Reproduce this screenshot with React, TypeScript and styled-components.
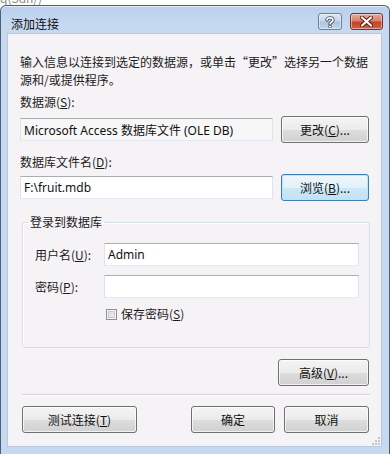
import React from "react";
import styled, { createGlobalStyle } from "styled-components";

const GlobalStyle = createGlobalStyle`
  html, body { margin: 0; padding: 0; background: #ffffff; }
  body {
    width: 390px; height: 454px; overflow: hidden;
    font-family: "Noto Sans CJK SC", "Noto Sans", sans-serif;
    font-size: 12px; color: #1b1b1b;
  }
  #root { width: 390px; height: 454px; }
`;

const Page = styled.div`
  width: 390px;
  height: 454px;
  display: flex;
  flex-direction: column;
  overflow: hidden;
`;

const TopStrip = styled.div`
  height: 5px;
  overflow: hidden;
  background: #fff;
  color: #8a8a8a;
  font-size: 12px;
  line-height: 14px;
  span { display: block; margin-top: -9px; padding-left: 0; }
`;

const Window = styled.div`
  flex: 1;
  display: flex;
  flex-direction: column;
  border: 1px solid #4d5d72;
  border-bottom: none;
  border-radius: 6px 6px 0 0;
  background: linear-gradient(#b9cfec 0px, #c6d9f1 20px, #c6d9f1 100%);
  box-shadow: inset 0 1px 0 rgba(255,255,255,0.6);
`;

const TitleBar = styled.div`
  height: 27px;
  display: flex;
  align-items: flex-start;
  padding: 0 6px 0 10px;
`;

const Title = styled.div`
  font-size: 12px;
  line-height: 14px;
  margin-top: 11px;
  color: #111;
`;

const Controls = styled.div`
  margin-left: auto;
  margin-top: 7px;
  display: flex;
  gap: 8px;
`;

const CaptionButton = styled.div<{ $close?: boolean }>`
  width: ${(p) => (p.$close ? 33 : 24)}px;
  height: 17px;
  box-sizing: border-box;
  border: 1px solid ${(p) => (p.$close ? "#7a2e24" : "#6d7f98")};
  border-radius: 3px;
  display: flex;
  align-items: center;
  justify-content: center;
  background: ${(p) =>
    p.$close
      ? "linear-gradient(#e9a99a 0%, #d9816d 45%, #c2422b 55%, #d6603f 100%)"
      : "linear-gradient(#dce7f5 0%, #c8d7ec 45%, #aec3df 55%, #c3d6ee 100%)"};
  box-shadow: inset 0 0 0 1px rgba(255,255,255,0.45);
`;

const Body = styled.div`
  flex: 1;
  display: flex;
  padding: 0 7px 7px 6px;
`;

const Content = styled.div`
  position: relative;
  flex: 1;
  min-width: 0;
  background: #f5f3f5;
  border: 1px solid #b8c8dc;
  padding: 19px 12px 0 12px;
  display: flex;
  flex-direction: column;
`;

const Para = styled.p`
  margin: 0;
  line-height: 18px;
`;

const Label = styled.div<{ $mt: number }>`
  margin-top: ${(p) => p.$mt}px;
  line-height: 18px;
  u { text-decoration: underline; text-underline-offset: 1px; }
`;

const FieldRow = styled.div<{ $mt: number }>`
  margin-top: ${(p) => p.$mt}px;
  display: flex;
  align-items: center;
  gap: 8px;
`;

const TextBox = styled.div<{ $readonly?: boolean; $w?: number }>`
  ${(p) => (p.$w ? `width: ${p.$w}px;` : "flex: 1;")}
  height: 23px;
  box-sizing: border-box;
  border: 1px solid #e2e3ea;
  border-top-color: #abadb3;
  border-bottom-color: #e3e9ef;
  background: ${(p) => (p.$readonly ? "#f7f7f7" : "#ffffff")};
  padding: 0 3px;
  display: flex;
  align-items: center;
  font-family: "Noto Sans", "Noto Sans CJK SC", sans-serif;
  font-size: 12px;
  color: #111;
  white-space: nowrap;
`;

const Button = styled.div<{ $w: number; $focus?: boolean }>`
  width: ${(p) => p.$w}px;
  height: 27px;
  box-sizing: border-box;
  border: 1px solid ${(p) => (p.$focus ? "#3c7fb1" : "#707070")};
  border-radius: 3px;
  display: flex;
  align-items: center;
  justify-content: center;
  font-size: 12px;
  color: #111;
  background: ${(p) =>
    p.$focus
      ? "linear-gradient(#eef7fc 0%, #e2f1fa 50%, #cde8f7 51%, #c2e2f4 100%)"
      : "linear-gradient(#f4f4f4 0%, #ebebeb 50%, #dddddd 51%, #d1d1d1 100%)"};
  box-shadow: inset 0 0 0 1px ${(p) => (p.$focus ? "rgba(180,230,250,0.9)" : "rgba(255,255,255,0.7)")};
  u { text-decoration: underline; text-underline-offset: 1px; }
`;

const Group = styled.fieldset`
  margin: 12px -1px 0 2px;
  padding: 0 10px 24px 12px;
  border: 1px solid #d5dfe5;
  border-radius: 3px;
  box-shadow: inset 1px 1px 0 #ffffff;
`;

const Legend = styled.legend`
  margin-left: -7px;
  padding: 0 2px;
  line-height: 18px;
`;

const GroupGrid = styled.div`
  margin-top: 12px;
  display: grid;
  grid-template-columns: 69px 1fr;
  row-gap: 9px;
  align-items: center;
  u { text-decoration: underline; text-underline-offset: 1px; }
`;

const CheckRow = styled.div`
  grid-column: 2;
  margin-top: -2px;
  display: flex;
  align-items: center;
  gap: 4px;
  padding-left: 2px;
  line-height: 18px;
`;

const CheckBox = styled.span`
  width: 11px;
  height: 11px;
  box-sizing: border-box;
  border: 1px solid #8e8f8f;
  background: linear-gradient(135deg, #d8d8d8 0%, #f4f4f4 100%);
  box-shadow: inset 0 0 0 1px #f7f7f7, inset 0 0 0 2px #c9c9c9;
`;

const RightRow = styled.div`
  margin-top: 11px;
  display: flex;
  justify-content: flex-end;
`;

const Separator = styled.div`
  margin: 8px -1px 0 2px;
  border-top: 1px solid #d3d3d3;
  border-bottom: 1px solid #ffffff;
`;

const ButtonRow = styled.div`
  margin-top: 10px;
  padding-left: 2px;
  display: flex;
  gap: 9px;
`;

const Spacer = styled.div`
  flex: 1;
`;

const Grip = styled.svg`
  position: absolute;
  right: 1px;
  bottom: 1px;
`;

export default function App() {
  return (
    <>
      <GlobalStyle />
      <Page>
        <TopStrip>
          <span>q(Sdn/)</span>
        </TopStrip>
        <Window>
          <TitleBar>
            <Title>添加连接</Title>
            <Controls>
              <CaptionButton>
                <svg width="10" height="12" viewBox="0 0 10 12">
                  <path
                    d="M2 4 C2 1.2 8 1.2 8 4 C8 6 5 6 5 8"
                    fill="none"
                    stroke="#3f4f66"
                    strokeWidth="3.4"
                    strokeLinecap="round"
                  />
                  <path
                    d="M2 4 C2 1.2 8 1.2 8 4 C8 6 5 6 5 8"
                    fill="none"
                    stroke="#ffffff"
                    strokeWidth="1.6"
                    strokeLinecap="round"
                  />
                  <circle cx="5" cy="10.6" r="1.5" fill="#ffffff" stroke="#3f4f66" strokeWidth="0.9" />
                </svg>
              </CaptionButton>
              <CaptionButton $close>
                <svg width="13" height="11" viewBox="0 0 13 11">
                  <path d="M2 1.5 L11 9.5 M11 1.5 L2 9.5" stroke="#5a1a12" strokeWidth="4" strokeLinecap="round" />
                  <path d="M2 1.5 L11 9.5 M11 1.5 L2 9.5" stroke="#ffffff" strokeWidth="2.2" strokeLinecap="round" />
                </svg>
              </CaptionButton>
            </Controls>
          </TitleBar>
          <Body>
            <Content>
              <Para>输入信息以连接到选定的数据源，或单击“更改”选择另一个数据源和/或提供程序。</Para>
              <Label $mt={4}>
                数据源(<u>S</u>):
              </Label>
              <FieldRow $mt={5}>
                <TextBox $readonly $w={253}>Microsoft Access 数据库文件 (OLE DB)</TextBox>
                <Button $w={88}>
                  更改(<u>C</u>)...
                </Button>
              </FieldRow>
              <Label $mt={10}>
                数据库文件名(<u>D</u>):
              </Label>
              <FieldRow $mt={3}>
                <TextBox $w={253}>F:\fruit.mdb</TextBox>
                <Button $w={88} $focus>
                  浏览(<u>B</u>)...
                </Button>
              </FieldRow>
              <Group>
                <Legend>登录到数据库</Legend>
                <GroupGrid>
                  <span>
                    用户名(<u>U</u>):
                  </span>
                  <TextBox>Admin</TextBox>
                  <span>
                    密码(<u>P</u>):
                  </span>
                  <TextBox />
                  <CheckRow>
                    <CheckBox />
                    <span>
                      保存密码(<u>S</u>)
                    </span>
                  </CheckRow>
                </GroupGrid>
              </Group>
              <RightRow>
                <Button $w={91}>
                  高级(<u>V</u>)...
                </Button>
              </RightRow>
              <Separator />
              <ButtonRow>
                <Button $w={115}>
                  测试连接(<u>T</u>)
                </Button>
                <Spacer />
                <Button $w={84}>确定</Button>
                <Button $w={85}>取消</Button>
              </ButtonRow>
              <Grip width="8" height="8" viewBox="0 0 8 8">
                <g fill="#c5c5c5">
                  <rect x="6" y="0" width="2" height="2" />
                  <rect x="3" y="3" width="2" height="2" />
                  <rect x="6" y="3" width="2" height="2" />
                  <rect x="0" y="6" width="2" height="2" />
                  <rect x="3" y="6" width="2" height="2" />
                  <rect x="6" y="6" width="2" height="2" />
                </g>
              </Grip>
            </Content>
          </Body>
        </Window>
      </Page>
    </>
  );
}
